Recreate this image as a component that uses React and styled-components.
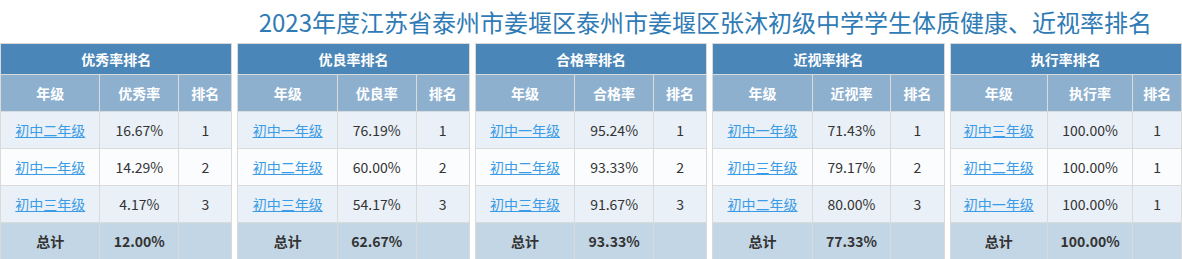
import styled, { createGlobalStyle } from "styled-components";

const GlobalStyle = createGlobalStyle`
  body {
    margin: 0;
    background: #fff;
    font-family: "Noto Sans CJK SC", "Noto Sans", sans-serif;
  }
`;

const panels = [
  {
    title: "优秀率排名",
    label: "优秀率",
    cols: ["43%", "34%", "23%"],
    rows: [
      ["初中二年级", "16.67%", "1"],
      ["初中一年级", "14.29%", "2"],
      ["初中三年级", "4.17%", "3"],
    ],
    total: "12.00%",
  },
  {
    title: "优良率排名",
    label: "优良率",
    cols: ["43%", "34%", "23%"],
    rows: [
      ["初中一年级", "76.19%", "1"],
      ["初中二年级", "60.00%", "2"],
      ["初中三年级", "54.17%", "3"],
    ],
    total: "62.67%",
  },
  {
    title: "合格率排名",
    label: "合格率",
    cols: ["43%", "34%", "23%"],
    rows: [
      ["初中一年级", "95.24%", "1"],
      ["初中二年级", "93.33%", "2"],
      ["初中三年级", "91.67%", "3"],
    ],
    total: "93.33%",
  },
  {
    title: "近视率排名",
    label: "近视率",
    cols: ["43%", "34%", "23%"],
    rows: [
      ["初中一年级", "71.43%", "1"],
      ["初中三年级", "79.17%", "2"],
      ["初中二年级", "80.00%", "3"],
    ],
    total: "77.33%",
  },
  {
    title: "执行率排名",
    label: "执行率",
    cols: ["42%", "37%", "21%"],
    rows: [
      ["初中三年级", "100.00%", "1"],
      ["初中二年级", "100.00%", "1"],
      ["初中一年级", "100.00%", "1"],
    ],
    total: "100.00%",
  },
];

function RankPanel({ panel }) {
  return (
    <Table>
      <colgroup>
        {panel.cols.map((w, i) => (
          <col key={i} style={{ width: w }} />
        ))}
      </colgroup>
      <thead>
        <tr>
          <TitleCell colSpan={3}>{panel.title}</TitleCell>
        </tr>
        <tr>
          <HeadCell>年级</HeadCell>
          <HeadCell>{panel.label}</HeadCell>
          <HeadCell>排名</HeadCell>
        </tr>
      </thead>
      <tbody>
        {panel.rows.map((row, i) => (
          <DataRow key={i} $odd={i % 2 === 0}>
            <Cell>
              <GradeLink href="#">{row[0]}</GradeLink>
            </Cell>
            <Cell>{row[1]}</Cell>
            <Cell>{row[2]}</Cell>
          </DataRow>
        ))}
        <TotalRow>
          <Cell>总计</Cell>
          <Cell>{panel.total}</Cell>
          <Cell />
        </TotalRow>
      </tbody>
    </Table>
  );
}

export default function App() {
  return (
    <Page>
      <GlobalStyle />
      <Title>2023年度江苏省泰州市姜堰区泰州市姜堰区张沐初级中学学生体质健康、近视率排名</Title>
      <Panels>
        {panels.map((p) => (
          <RankPanel key={p.title} panel={p} />
        ))}
      </Panels>
    </Page>
  );
}

const Page = styled.div`
  width: 1182px;
  height: 259px;
  overflow: hidden;
`;

const Title = styled.h1`
  margin: 0;
  height: 43px;
  padding-right: 30px;
  box-sizing: border-box;
  text-align: right;
  font-size: 24px;
  font-weight: normal;
  line-height: 43px;
  color: #2f7bb6;
`;

const Panels = styled.div`
  display: grid;
  grid-template-columns: repeat(5, 1fr);
  column-gap: 5px;
  align-items: start;
`;

const Table = styled.table`
  width: 100%;
  border-collapse: collapse;
  table-layout: fixed;
  border: 1px solid #dadada;
  font-size: 14px;
  color: #333;
  text-align: center;
`;

const TitleCell = styled.th`
  height: 30px;
  padding: 0;
  background: #4a86b8;
  color: #fff;
  font-weight: bold;
  border: 1px solid #dadada;
`;

const HeadCell = styled.th`
  height: 36px;
  padding: 0;
  background: #8eb0cf;
  color: #fff;
  font-weight: bold;
  border: 1px solid #dadada;
`;

const Cell = styled.td`
  height: 36px;
  padding: 0;
  border: 1px solid #dadada;
`;

const DataRow = styled.tr`
  background: ${(p) => (p.$odd ? "#e9f0f7" : "#fbfcfe")};
`;

const TotalRow = styled.tr`
  background: #c3d6e5;
  font-weight: bold;
`;

const GradeLink = styled.a`
  color: #3a9be6;
  text-decoration: underline;
`;
